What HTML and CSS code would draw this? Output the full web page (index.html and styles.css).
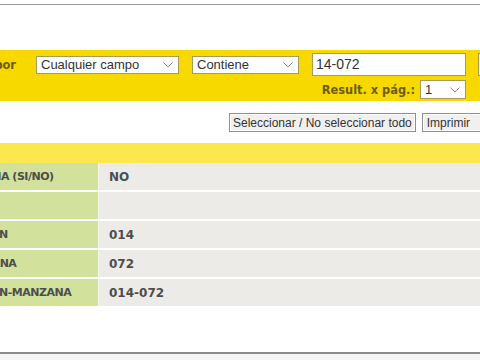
FILE: index.html
```html
<!DOCTYPE html>
<html lang="es">
<head>
  <meta charset="UTF-8">
  <title>Consulta de parcelas</title>
  <link rel="stylesheet" href="styles.css">
</head>
<body>
  <div class="top-rule"></div>

  <div class="page">
    <!-- Search bar -->
    <div class="search">
      <div class="search-row">
        <span class="search-label">Buscar por</span>
        <div class="select select-field">
          <span>Cualquier campo</span>
          <svg class="chevron" width="10" height="6" viewBox="0 0 10 6"><path d="M0.5 0.5 L5 5 L9.5 0.5" fill="none" stroke="#8a8a8a" stroke-width="1"/></svg>
        </div>
        <div class="select select-op">
          <span>Contiene</span>
          <svg class="chevron" width="10" height="6" viewBox="0 0 10 6"><path d="M0.5 0.5 L5 5 L9.5 0.5" fill="none" stroke="#8a8a8a" stroke-width="1"/></svg>
        </div>
        <div class="text-input">14-072</div>
        <div class="search-btn"></div>
      </div>
      <div class="search-row paging">
        <span class="search-label">Result. x pág.:</span>
        <div class="select select-page">
          <span>1</span>
          <svg class="chevron" width="10" height="6" viewBox="0 0 10 6"><path d="M0.5 0.5 L5 5 L9.5 0.5" fill="none" stroke="#8a8a8a" stroke-width="1"/></svg>
        </div>
      </div>
    </div>

    <!-- Toolbar -->
    <div class="toolbar">
      <button class="btn">Seleccionar / No seleccionar todo</button>
      <button class="btn btn-print">Imprimir</button>
    </div>

    <div class="strip"></div>

    <!-- Result -->
    <table class="result">
      <tr><td class="label">ESQUINA (SI/NO)</td><td class="value">NO</td></tr>
      <tr><td class="label faint">P.H-UNI</td><td class="value"></td></tr>
      <tr><td class="label">SECCION</td><td class="value">014</td></tr>
      <tr><td class="label">MANZANA</td><td class="value">072</td></tr>
      <tr><td class="label">SECCION-MANZANA</td><td class="value">014-072</td></tr>
    </table>
  </div>

  <div class="bottom-rule"></div>
</body>
</html>
```

FILE: styles.css
```css
/* Overall */
body {
  margin: 0;
  background-color: #fff;
  font-family: 'DejaVu Sans', Verdana, sans-serif;
  color: #333;
  overflow: hidden;
  height: 360px;
  position: relative;
}

.top-rule {
  margin-top: 4px;
  border-top: 1px solid #9c9c9c;
  height: 45px;
}

.page {
  width: 700px;
  margin-left: -100px;
}

/* Search bar */
.search {
  background-color: #f7d900;
  height: 51px;
  padding-top: 3px;
  box-sizing: border-box;
}

.search-row {
  display: flex;
  align-items: center;
}

.search-label {
  font-weight: bold;
  font-size: 11.4px;
  color: #6e5c14;
}

.search-row .search-label {
  width: 116px;
  text-align: right;
  margin-right: 20px;
}

.select {
  box-sizing: border-box;
  height: 18px;
  background-color: #fff;
  border: 1px solid #a89a58;
  display: flex;
  align-items: center;
  justify-content: space-between;
  padding: 0 5px 0 4px;
  font-family: 'Liberation Sans', Arial, sans-serif;
  font-size: 13px;
  color: #333;
}

.chevron {
  display: block;
}

.select-field {
  width: 143px;
}

.select-op {
  width: 107px;
  margin-left: 13px;
}

.text-input {
  box-sizing: border-box;
  width: 154px;
  height: 23px;
  margin-left: 13px;
  background-color: #fff;
  border: 1px solid #a89a58;
  padding: 0 3px;
  font-family: 'Liberation Sans', Arial, sans-serif;
  font-size: 14px;
  line-height: 21px;
  color: #333;
}

.search-btn {
  width: 40px;
  height: 23px;
  margin-left: 12px;
  box-sizing: border-box;
  border: 1px solid #a89a58;
  background-color: #f3efe0;
}

.paging {
  margin-top: 4px;
  width: 566px;
  justify-content: flex-end;
}

.paging .search-label {
  width: auto;
  margin-right: 5px;
}

.select-page {
  width: 46px;
  height: 19px;
}

/* Toolbar */
.toolbar {
  display: flex;
  gap: 6px;
  padding: 12px 0 0 329px;
  height: 42px;
  box-sizing: border-box;
}

.btn {
  height: 19px;
  padding: 0 3px;
  font-family: 'Liberation Sans', Arial, sans-serif;
  font-size: 12px;
  color: #333;
  background-color: #f0f0f0;
  border: 1px solid #8f8f8f;
  box-shadow: inset 0 0 0 1px #fff;
  white-space: nowrap;
}

.btn-print {
  padding: 0 12px 0 4px;
}

.strip {
  height: 20px;
  background-color: #fae84e;
}

/* Result table */
.result {
  border-collapse: collapse;
  width: 100%;
}

.result td {
  height: 27px;
  padding: 0;
  border-bottom: 2px solid #fff;
  font-weight: bold;
  color: #4d4d4d;
}

.result tr:last-child td {
  border-bottom: 0;
}

.label {
  width: 141px;
  padding-left: 57px !important;
  font-size: 11px;
  letter-spacing: -0.5px;
  background-color: #d2e19c;
  border-right: 1px solid #f4f6ea;
  white-space: nowrap;
}

.label.faint {
  color: #a9b48a;
}

.value {
  padding-left: 10px !important;
  font-size: 12px;
  background-color: #edebe7;
}

.bottom-rule {
  position: absolute;
  left: 0;
  right: 0;
  top: 352px;
  height: 8px;
  border-top: 2px solid #8c8c8c;
  background-color: #f4f4f4;
  box-sizing: border-box;
}
```
